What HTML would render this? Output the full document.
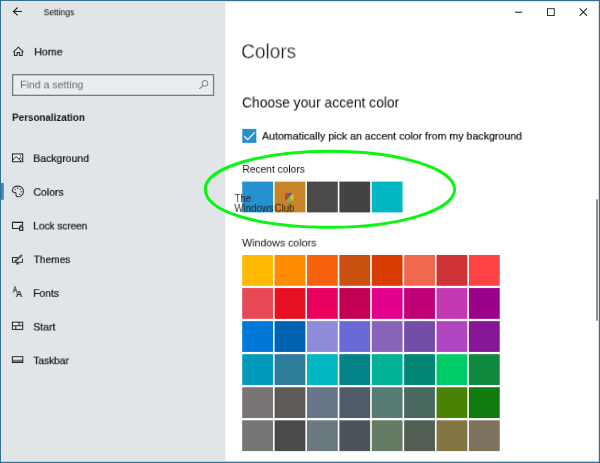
<!DOCTYPE html>
<html><head><meta charset="utf-8">
<style>
html,body{margin:0;padding:0;}
body{width:600px;height:463px;overflow:hidden;background:#fff;font-family:"Liberation Sans",sans-serif;color:#111;position:relative;}
#side{position:absolute;left:0;top:0;width:225px;height:463px;background:#e1e5e8;}
.t{position:absolute;left:0;top:0;white-space:nowrap;line-height:1;transform-origin:0 0;will-change:transform;}
svg{position:absolute;overflow:visible;}
.sw{position:absolute;width:30.8px;height:30.8px;}
.b{position:absolute;background:#336e8e;}
</style></head><body>
<div id="side"></div><div style="position:absolute;left:225px;top:0;width:1px;height:463px;background:#f4f6f7;"></div>
<svg width="600" height="463" viewBox="0 0 600 463" style="left:0;top:0;"><rect x="12.65" y="74.65" width="200.9" height="20.7" fill="#eaedef" stroke="#787d81" stroke-width="1.3"/></svg>
<svg width="600" height="463" viewBox="0 0 600 463" style="left:0;top:0;">
<rect x="242.3" y="128.9" width="14" height="14" fill="#2590d0"/>
<rect x="242.20" y="181.6" width="30.8" height="30.8" fill="#2591CF"/>
<rect x="274.59" y="181.6" width="30.8" height="30.8" fill="#C88429"/>
<rect x="306.98" y="181.6" width="30.8" height="30.8" fill="#4C4A48"/>
<rect x="339.37" y="181.6" width="30.8" height="30.8" fill="#444342"/>
<rect x="371.76" y="181.6" width="30.8" height="30.8" fill="#00B7C3"/>

<rect x="242.20" y="255.00" width="30.8" height="30.8" fill="#FFB900"/>
<rect x="274.59" y="255.00" width="30.8" height="30.8" fill="#FF8C00"/>
<rect x="306.98" y="255.00" width="30.8" height="30.8" fill="#F7630C"/>
<rect x="339.37" y="255.00" width="30.8" height="30.8" fill="#CA5010"/>
<rect x="371.76" y="255.00" width="30.8" height="30.8" fill="#DA3B01"/>
<rect x="404.15" y="255.00" width="30.8" height="30.8" fill="#EF6950"/>
<rect x="436.54" y="255.00" width="30.8" height="30.8" fill="#D13438"/>
<rect x="468.93" y="255.00" width="30.8" height="30.8" fill="#FF4343"/>
<rect x="242.20" y="288.06" width="30.8" height="30.8" fill="#E74856"/>
<rect x="274.59" y="288.06" width="30.8" height="30.8" fill="#E81123"/>
<rect x="306.98" y="288.06" width="30.8" height="30.8" fill="#EA005E"/>
<rect x="339.37" y="288.06" width="30.8" height="30.8" fill="#C30052"/>
<rect x="371.76" y="288.06" width="30.8" height="30.8" fill="#E3008C"/>
<rect x="404.15" y="288.06" width="30.8" height="30.8" fill="#BF0077"/>
<rect x="436.54" y="288.06" width="30.8" height="30.8" fill="#C239B3"/>
<rect x="468.93" y="288.06" width="30.8" height="30.8" fill="#9A0089"/>
<rect x="242.20" y="321.12" width="30.8" height="30.8" fill="#0078D7"/>
<rect x="274.59" y="321.12" width="30.8" height="30.8" fill="#0063B1"/>
<rect x="306.98" y="321.12" width="30.8" height="30.8" fill="#8E8CD8"/>
<rect x="339.37" y="321.12" width="30.8" height="30.8" fill="#6B69D6"/>
<rect x="371.76" y="321.12" width="30.8" height="30.8" fill="#8764B8"/>
<rect x="404.15" y="321.12" width="30.8" height="30.8" fill="#744DA9"/>
<rect x="436.54" y="321.12" width="30.8" height="30.8" fill="#B146C2"/>
<rect x="468.93" y="321.12" width="30.8" height="30.8" fill="#881798"/>
<rect x="242.20" y="354.18" width="30.8" height="30.8" fill="#0099BC"/>
<rect x="274.59" y="354.18" width="30.8" height="30.8" fill="#2D7D9A"/>
<rect x="306.98" y="354.18" width="30.8" height="30.8" fill="#00B7C3"/>
<rect x="339.37" y="354.18" width="30.8" height="30.8" fill="#038387"/>
<rect x="371.76" y="354.18" width="30.8" height="30.8" fill="#00B294"/>
<rect x="404.15" y="354.18" width="30.8" height="30.8" fill="#018574"/>
<rect x="436.54" y="354.18" width="30.8" height="30.8" fill="#00CC6A"/>
<rect x="468.93" y="354.18" width="30.8" height="30.8" fill="#10893E"/>
<rect x="242.20" y="387.24" width="30.8" height="30.8" fill="#7A7574"/>
<rect x="274.59" y="387.24" width="30.8" height="30.8" fill="#5D5A58"/>
<rect x="306.98" y="387.24" width="30.8" height="30.8" fill="#68768A"/>
<rect x="339.37" y="387.24" width="30.8" height="30.8" fill="#515C6B"/>
<rect x="371.76" y="387.24" width="30.8" height="30.8" fill="#567C73"/>
<rect x="404.15" y="387.24" width="30.8" height="30.8" fill="#486860"/>
<rect x="436.54" y="387.24" width="30.8" height="30.8" fill="#498205"/>
<rect x="468.93" y="387.24" width="30.8" height="30.8" fill="#107C10"/>
<rect x="242.20" y="420.30" width="30.8" height="30.8" fill="#767676"/>
<rect x="274.59" y="420.30" width="30.8" height="30.8" fill="#4C4A48"/>
<rect x="306.98" y="420.30" width="30.8" height="30.8" fill="#69797E"/>
<rect x="339.37" y="420.30" width="30.8" height="30.8" fill="#4A5459"/>
<rect x="371.76" y="420.30" width="30.8" height="30.8" fill="#647C64"/>
<rect x="404.15" y="420.30" width="30.8" height="30.8" fill="#525E54"/>
<rect x="436.54" y="420.30" width="30.8" height="30.8" fill="#847545"/>
<rect x="468.93" y="420.30" width="30.8" height="30.8" fill="#7E735F"/>
</svg>
<!-- logo -->
<svg width="9" height="9" viewBox="0 0 8 8" style="left:285px;top:193.3px;width:8.4px;height:8.4px;">
<path d="M0 0H8L4 4Z" fill="#3d67c2"/><path d="M0 0V8L4 4Z" fill="#d8334c"/><path d="M8 0V8L4 4Z" fill="#efb43e"/><path d="M0 8H8L4 4Z" fill="#7db94c"/></svg>
<div class="t" style="font-size:11.8px;font-weight:normal;color:rgba(22,22,22,.88);transform:translate(234.42px,193.00px) scale(0.8143,1.000);">The</div>
<div class="t" style="font-size:11.8px;font-weight:normal;color:rgba(22,22,22,.88);transform:translate(234.42px,202.70px) scale(0.8182,1.000);">Windows</div>
<div class="t" style="font-size:11.8px;font-weight:normal;color:rgba(22,22,22,.88);transform:translate(274.62px,202.70px) scale(0.8140,1.000);">Club</div>

<div class="t" style="font-size:9.4px;font-weight:normal;color:#000;transform:translate(43.69px,7.20px) scale(0.9008,1.000);">Settings</div>
<div class="t" style="font-size:11.6px;font-weight:normal;color:#111;-webkit-text-stroke:0.22px #111;transform:translate(34.26px,45.90px) scale(0.9172,0.950);">Home</div>
<div class="t" style="font-size:11.4px;font-weight:normal;color:#656a6e;transform:translate(20.17px,79.75px) scale(0.9251,0.950);">Find a setting</div>
<div class="t" style="font-size:10.8px;font-weight:bold;color:#111;transform:translate(12.01px,112.53px) scale(0.9134,0.930);">Personalization</div>
<div class="t" style="font-size:11.6px;font-weight:normal;color:#111;-webkit-text-stroke:0.22px #111;transform:translate(33.27px,152.50px) scale(0.8994,0.950);">Background</div>
<div class="t" style="font-size:11.6px;font-weight:normal;color:#111;-webkit-text-stroke:0.22px #111;transform:translate(33.47px,186.20px) scale(0.8996,0.950);">Colors</div>
<div class="t" style="font-size:11.6px;font-weight:normal;color:#111;-webkit-text-stroke:0.22px #111;transform:translate(33.30px,219.90px) scale(0.8638,0.950);">Lock screen</div>
<div class="t" style="font-size:11.6px;font-weight:normal;color:#111;-webkit-text-stroke:0.22px #111;transform:translate(33.69px,253.60px) scale(0.8741,0.950);">Themes</div>
<div class="t" style="font-size:11.6px;font-weight:normal;color:#111;-webkit-text-stroke:0.22px #111;transform:translate(33.29px,287.30px) scale(0.8802,0.950);">Fonts</div>
<div class="t" style="font-size:11.6px;font-weight:normal;color:#111;-webkit-text-stroke:0.22px #111;transform:translate(33.27px,321.00px) scale(0.9007,0.950);">Start</div>
<div class="t" style="font-size:11.6px;font-weight:normal;color:#111;-webkit-text-stroke:0.22px #111;transform:translate(33.29px,354.70px) scale(0.8746,0.950);">Taskbar</div>
<div class="t" style="font-size:20.0px;font-weight:normal;color:#1a1a1a;-webkit-text-stroke:0.25px #fff;transform:translate(241.16px,41.30px) scale(0.9513,1.000);">Colors</div>
<div class="t" style="font-size:14.6px;font-weight:normal;color:#111;transform:translate(241.97px,95.50px) scale(0.9503,1.000);">Choose your accent color</div>
<div class="t" style="font-size:11.6px;font-weight:normal;color:#111;-webkit-text-stroke:0.22px #111;transform:translate(261.96px,130.10px) scale(0.9173,0.950);">Automatically pick an accent color from my background</div>
<div class="t" style="font-size:11.4px;font-weight:normal;color:#111;transform:translate(242.39px,164.10px) scale(0.8964,0.950);">Recent colors</div>
<div class="t" style="font-size:11.3px;font-weight:normal;color:#111;transform:translate(242.16px,237.85px) scale(0.9376,0.950);">Windows colors</div>


<svg width="600" height="463" viewBox="0 0 600 463" style="left:0;top:0;" fill="none" stroke="#2b2b2b" stroke-width="1" stroke-linecap="butt" stroke-linejoin="miter">
<!-- back arrow -->
<path d="M22 11.45H13.6" stroke="#1a1a1a" stroke-width="1"/><path d="M17.6 7.5L13.5 11.45L17.6 15.4" stroke="#1a1a1a" stroke-width="1.05"/>
<!-- home -->
<path d="M13.3 52.1L18.4 47.2L23.4 52.1M14.4 51.2V55.4H17.1V52.6H19.6V55.4H22.2V51.2" stroke-width="1.05"/>
<!-- search -->
<circle cx="205" cy="83.4" r="2.9" stroke="#7a7e82" stroke-width="1"/>
<path d="M203 85.6L199.4 88.8" stroke="#7a7e82" stroke-width="1.1"/>
<!-- background -->
<rect x="12.5" y="153.9" width="10.2" height="7.8" stroke-width="1.05" fill="rgba(255,255,255,.35)"/>
<path d="M13 160L15.9 156.5L21.4 161.3M18.7 158.9L20.3 157.7L22.4 159.6" stroke-width="0.95"/>
<rect x="20" y="155.3" width="1" height="1" fill="#2b2b2b" stroke="none"/>
<!-- palette -->
<path d="M18 186.1C21.2 186.1 23.4 188.4 23.4 191.4C23.4 194.6 21 196.7 18.4 196.7C16.6 196.7 15.8 195.6 16 194.5C16.2 193.4 15.9 192.5 14.8 192.4C13.6 192.3 12.3 192.4 12.3 190.7C12.3 188.2 14.8 186.1 18 186.1Z" stroke-width="1.05"/>
<g fill="#2b2b2b" stroke="none"><circle cx="15.2" cy="189.6" r=".7"/><circle cx="17.6" cy="188.2" r=".7"/><circle cx="20.2" cy="189.2" r=".7"/><circle cx="21.2" cy="191.8" r=".7"/><circle cx="19.8" cy="194.2" r=".7"/></g>
<!-- lock screen -->
<path d="M19 228.4H12.5V222.4H22.6V225.4" stroke-width="1.05"/>
<path d="M12 222.3H23.1" stroke-width="1.3"/>
<rect x="19.6" y="227" width="3.2" height="3.3" stroke-width="1.2" fill="rgba(255,255,255,.4)"/>
<path d="M20.1 227V226.3C20.1 224.9 22.3 224.9 22.3 226.3V227" stroke-width="1"/>
<!-- themes -->
<path d="M18.6 257.4H12.5V262.3H22.4V258.4" stroke-width="1.05" fill="rgba(255,255,255,.35)"/>
<path d="M16 263.9H19.2M17.6 262.4V264" stroke-width="1"/>
<path d="M14.9 261.4L22 254.9" stroke-width="2.1" stroke="#444"/><path d="M16.6 259.85L21.3 255.55" stroke-width="0.6" stroke="#b9bdc0"/>
<!-- start -->
<rect x="12.4" y="322.2" width="10.3" height="7.2" stroke-width="1.05" fill="rgba(255,255,255,.35)"/>
<path d="M12.4 325.8H22.7M19.1 322.2V325.8M15.8 325.8V329.4" stroke-width="1.05"/>
<!-- taskbar -->
<rect x="12.4" y="356.7" width="10.4" height="5.8" fill="#f3f4f5" stroke="none"/>
<rect x="12.5" y="359.6" width="10.3" height="2.8" fill="#777" stroke="none"/>
<rect x="12.4" y="356.7" width="10.4" height="5.8" stroke-width="1.05"/>
<!-- window controls -->
<path d="M515 12.2H522.2" stroke="#2a2a2a" stroke-width="1.1"/>
<rect x="547.5" y="8.7" width="6.8" height="6.8" stroke="#333" stroke-width="1"/>
<path d="M579.6 8.4L587 15.8M587 8.4L579.6 15.8" stroke="#2a2a2a" stroke-width="1.15"/>
<!-- checkbox tick -->
<path d="M244.2 136.1L247.7 139.6L254.7 132.4" stroke="#fff" stroke-width="1.2"/>
</svg>

<div class="t" style="font-size:8.2px;font-weight:bold;color:#222;transform:translate(12.7px,286.6px) scaleX(.78);">A</div>
<div class="t" style="font-size:9.4px;font-weight:bold;color:#222;transform:translate(15.7px,288.9px) scaleX(.98);">A</div>
<!-- scrollbar thumb -->
<svg width="600" height="463" viewBox="0 0 600 463" style="left:0;top:0;"><rect x="596.2" y="199.3" width="1.7" height="121.4" fill="#7f7f7f"/></svg>
<!-- ellipse -->
<svg width="600" height="463" viewBox="0 0 600 463" style="left:0;top:0;"><path d="M205.30 189.00C205.30 168.12 260.90 151.20 329.50 151.20C398.59 151.20 454.60 168.21 454.60 189.20C454.60 210.24 399.26 227.30 331.00 227.30C258.09 227.30 205.30 211.98 205.30 189.00Z" fill="none" stroke="#0af612" stroke-width="3"/></svg>
<!-- window border -->
<svg width="600" height="463" viewBox="0 0 600 463" style="left:0;top:0;">
<rect x="1" y="1" width="598" height="1" fill="#f4f5f6"/>
<rect x="1" y="1" width="0.7" height="461" fill="#f4f5f6"/>
<rect x="1" y="460.9" width="598" height="0.9" fill="#f4f5f6"/>
<rect x="1" y="183" width="2.8" height="16.8" fill="#2490d0"/>
<rect x="0" y="0" width="600" height="1.1" fill="#336e8e"/>
<rect x="0" y="461.75" width="600" height="1.25" fill="#336e8e"/>
<rect x="0" y="0" width="1.05" height="463" fill="#336e8e"/>
<rect x="598.8" y="0" width="1.2" height="463" fill="#336e8e"/>
</svg>
</body></html>
